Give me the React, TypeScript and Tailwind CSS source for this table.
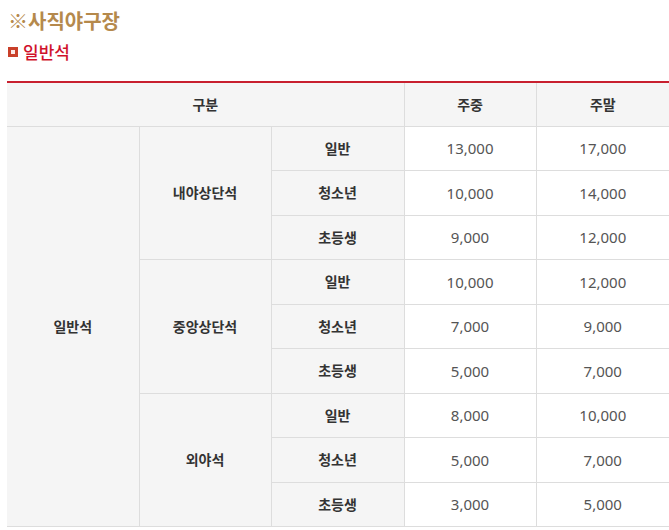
import React from "react";

const kr = { fontFamily: '"Noto Sans CJK KR", "Noto Sans", sans-serif' };
const num = { fontFamily: '"Noto Sans", "Noto Sans CJK KR", sans-serif' };

type Row = { label: string; wk: string; we: string };
type Group = { name: string; rows: Row[] };

const groups: Group[] = [
  {
    name: "내야상단석",
    rows: [
      { label: "일반", wk: "13,000", we: "17,000" },
      { label: "청소년", wk: "10,000", we: "14,000" },
      { label: "초등생", wk: "9,000", we: "12,000" },
    ],
  },
  {
    name: "중앙상단석",
    rows: [
      { label: "일반", wk: "10,000", we: "12,000" },
      { label: "청소년", wk: "7,000", we: "9,000" },
      { label: "초등생", wk: "5,000", we: "7,000" },
    ],
  },
  {
    name: "외야석",
    rows: [
      { label: "일반", wk: "8,000", we: "10,000" },
      { label: "청소년", wk: "5,000", we: "7,000" },
      { label: "초등생", wk: "3,000", we: "5,000" },
    ],
  },
];

export default function App() {
  const th =
    "bg-[#f5f5f5] border-b border-[#dddddd] text-center text-[14px] font-bold text-[#333333] p-0";
  const td = "border-b border-[#dddddd] text-center text-[15px] text-[#555555] p-0";
  return (
    <div className="w-[669px] h-[530px] overflow-hidden bg-white">
      <div className="pl-[8px] pt-[7px]">
        <h2 className="text-[20px] font-bold leading-[28px] text-[#b5894c]" style={kr}>
          ※사직야구장
        </h2>
        <div className="mt-[7px] flex items-center gap-[5px]">
          <span className="w-[10px] h-[10px] bg-[#c9402a] flex items-center justify-center">
            <span className="w-[4px] h-[4px] bg-[#fbe9e6]" />
          </span>
          <span className="text-[17px] leading-[20px] font-medium text-[#d0112b]" style={kr}>
            일반석
          </span>
        </div>
      </div>
      <div className="ml-[7px] mt-[19px] w-[662px]">
        <table className="table-fixed border-collapse border-t-2 border-[#c8202f] w-[662px]" style={kr}>
          <colgroup>
            <col className="w-[132px]" />
            <col className="w-[132px]" />
            <col className="w-[133px]" />
            <col className="w-[132px]" />
            <col className="w-[133px]" />
          </colgroup>
          <thead>
            <tr className="h-[44px]">
              <th colSpan={3} className={th + " border-r"}>
                구분
              </th>
              <th className={th + " border-r"}>주중</th>
              <th className={th}>주말</th>
            </tr>
          </thead>
          <tbody>
            {groups.map((g, gi) =>
              g.rows.map((r, ri) => (
                <tr key={gi + "-" + ri} className="h-[44.5px]">
                  {gi === 0 && ri === 0 && (
                    <td rowSpan={9} className={th + " border-r"}>
                      일반석
                    </td>
                  )}
                  {ri === 0 && (
                    <td rowSpan={3} className={th + " border-r"}>
                      {g.name}
                    </td>
                  )}
                  <td className={th + " border-r"}>{r.label}</td>
                  <td className={td + " border-r"} style={num}>
                    {r.wk}
                  </td>
                  <td className={td} style={num}>
                    {r.we}
                  </td>
                </tr>
              ))
            )}
          </tbody>
        </table>
      </div>
    </div>
  );
}
